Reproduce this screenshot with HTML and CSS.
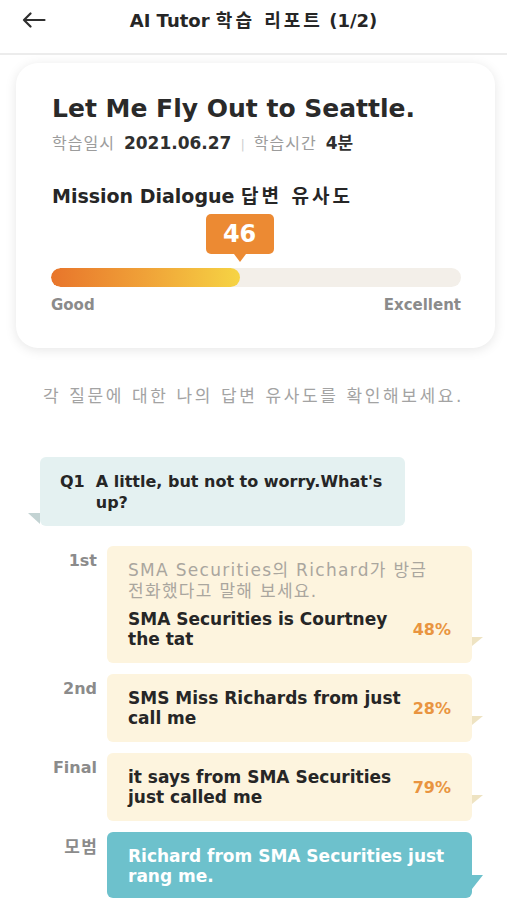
FILE: index.html
```html
<!DOCTYPE html>
<html lang="ko">
<head>
<meta charset="utf-8">
<title>AI Tutor 학습 리포트</title>
<link rel="stylesheet" href="styles.css">
</head>
<body>
<header class="topbar">
  <button class="back" aria-label="뒤로">
    <svg width="24" height="16" viewBox="0 0 24 16" fill="none" stroke="#2f2f2f" stroke-width="2.2" stroke-linecap="round" stroke-linejoin="round"><path d="M22.5 8H2M8.5 1.5L2 8l6.5 6.5"/></svg>
  </button>
  <h1 class="topbar-title">AI Tutor <span class="ko">학습 리포트</span> (1/2)</h1>
</header>

<main class="content">
  <section class="summary-card">
    <h2 class="lesson-title">Let Me Fly Out to Seattle.</h2>
    <p class="meta">
      <span class="meta-label">학습일시</span>
      <b class="meta-value">2021.06.27</b>
      <span class="sep">|</span>
      <span class="meta-label">학습시간</span>
      <b class="meta-value">4<span class="ko">분</span></b>
    </p>
    <h3 class="score-title">Mission Dialogue <span class="ko">답변 유사도</span></h3>
    <div class="score">
      <div class="badge-row" style="--v:46%">
        <span class="badge">46</span>
      </div>
      <div class="track"><div class="fill" style="width:46%"></div></div>
      <div class="scale"><span>Good</span><span>Excellent</span></div>
    </div>
  </section>

  <p class="hint">각 질문에 대한 나의 답변 유사도를 확인해보세요.</p>

  <div class="question">
    <span class="q-no">Q1</span>
    <span class="q-text">A little, but not to worry.What's up?</span>
  </div>

  <ol class="answers">
    <li class="answer">
      <span class="a-label">1st</span>
      <div class="bubble">
        <p class="prompt">SMA Securities의 Richard가 방금 전화했다고 말해 보세요.</p>
        <div class="a-row">
          <p class="a-text">SMA Securities is Courtney the tat</p>
          <span class="pct">48%</span>
        </div>
      </div>
    </li>
    <li class="answer">
      <span class="a-label">2nd</span>
      <div class="bubble">
        <div class="a-row">
          <p class="a-text">SMS Miss Richards from just call me</p>
          <span class="pct">28%</span>
        </div>
      </div>
    </li>
    <li class="answer">
      <span class="a-label">Final</span>
      <div class="bubble">
        <div class="a-row">
          <p class="a-text">it says from SMA Securities just called me</p>
          <span class="pct">79%</span>
        </div>
      </div>
    </li>
    <li class="answer">
      <span class="a-label a-label-ko">모범</span>
      <div class="bubble model">
        <p class="a-text">Richard from SMA Securities just rang me.</p>
      </div>
    </li>
  </ol>
</main>
</body>
</html>
```

FILE: styles.css
```css
* { box-sizing: border-box; }

body {
  margin: 0;
  width: 507px;
  background: #ffffff;
  font-family: "DejaVu Sans", "Noto Sans CJK KR", sans-serif;
  color: #2b2b2b;
}

p, h1, h2, h3, ol { margin: 0; padding: 0; }

/* ---------- top bar ---------- */
.topbar {
  height: 55px;
  display: grid;
  grid-template-columns: 1fr auto 1fr;
  align-items: start;
  padding-top: 10px;
  border-bottom: 2px solid #ececec;
}

.back {
  justify-self: start;
  margin-left: 22px;
  margin-top: 2px;
  padding: 0;
  border: 0;
  background: none;
  display: flex;
}

.topbar-title {
  font-size: 18px;
  line-height: 22px;
  font-weight: bold;
  color: #262626;
  white-space: nowrap;
}

.topbar-title .ko { letter-spacing: 3px; }

/* ---------- summary card ---------- */
.content { padding: 8px 0 0; }

.summary-card {
  margin: 0 12px 0 16px;
  padding: 31px 35px 34px 36px;
  border-radius: 22px;
  background: #fff;
  box-shadow: 0 2px 12px rgba(0, 0, 0, 0.1);
}

.lesson-title {
  font-size: 25px;
  line-height: 30px;
  font-weight: bold;
  color: #2a2a2a;
}

.meta {
  margin-top: 8px;
  font-size: 16px;
  line-height: 22px;
  display: flex;
  align-items: baseline;
  gap: 9px;
}

.meta-label { color: #9c9c9c; letter-spacing: 1px; }
.meta-value { color: #2f2f2f; font-size: 17px; }
.sep { color: #d0d0d0; font-size: 13px; }

.score-title {
  margin-top: 28px;
  font-size: 19px;
  line-height: 24px;
  font-weight: bold;
  color: #262626;
}
.score-title .ko { letter-spacing: 3px; }

.score { margin-top: 6px; margin-right: -1px; margin-left: -1px; }

.badge-row {
  height: 54px;
  padding-left: calc(var(--v) - 34px);
}

.badge {
  position: relative;
  display: inline-flex;
  align-items: center;
  justify-content: center;
  width: 68px;
  height: 40px;
  border-radius: 5px;
  background: #ec8a33;
  color: #fff;
  font-size: 24px;
  font-weight: bold;
}

.badge::after {
  content: "";
  position: absolute;
  left: 28px;
  bottom: -8px;
  border-left: 6px solid transparent;
  border-right: 6px solid transparent;
  border-top: 8px solid #ec8a33;
}

.track {
  height: 19px;
  border-radius: 10px;
  background: #f3efe9;
  overflow: hidden;
}

.fill {
  height: 100%;
  border-radius: 10px;
  background: linear-gradient(90deg, #e8752b 0%, #f0a238 50%, #f6d444 100%);
}

.scale {
  margin-top: 9px;
  display: flex;
  justify-content: space-between;
  font-size: 15px;
  line-height: 18px;
  font-weight: bold;
  color: #8b8b8b;
}

/* ---------- hint ---------- */
.hint {
  margin-top: 36px;
  text-align: center;
  font-size: 17px;
  line-height: 24px;
  color: #a3a3a3;
  letter-spacing: 2.6px;
}

/* ---------- question ---------- */
.question {
  position: relative;
  margin: 49px 0 0 40px;
  width: 365px;
  padding: 14px 16px 13px 20px;
  border-radius: 6px;
  background: #e4f1f1;
  display: flex;
  gap: 11px;
  font-size: 16px;
  line-height: 21px;
  font-weight: bold;
  color: #262626;
}

.question::before {
  content: "";
  position: absolute;
  left: -12px;
  bottom: 2px;
  border-top: 11px solid #c3d3d3;
  border-left: 12px solid transparent;
}

/* ---------- answers ---------- */
.answers {
  list-style: none;
  margin-top: 20px;
  padding: 0 35px 0 37px;
  display: flex;
  flex-direction: column;
  gap: 11px;
}

.answer {
  display: grid;
  grid-template-columns: 60px 1fr;
  column-gap: 10px;
  align-items: start;
}

.a-label {
  margin-top: 5px;
  text-align: right;
  font-size: 16px;
  line-height: 20px;
  font-weight: bold;
  color: #8b8b8b;
}

.a-label-ko { font-size: 17px; letter-spacing: 1.5px; margin-right: -1.5px; }

.bubble {
  position: relative;
  padding: 14px 21px 14px 21px;
  border-radius: 6px;
  background: #fdf4de;
}

.bubble::after {
  content: "";
  position: absolute;
  right: -11px;
  bottom: 17px;
  border-top: 9px solid #eee3c2;
  border-right: 11px solid transparent;
}

.prompt {
  max-width: 305px;
  margin-bottom: 7px;
  font-size: 17px;
  line-height: 21px;
  color: #aaa69e;
  letter-spacing: 1.3px;
}

.a-row {
  display: flex;
  align-items: center;
  gap: 12px;
}

.a-text {
  flex: 1;
  font-size: 17px;
  line-height: 20px;
  font-weight: bold;
  color: #262626;
}

.pct {
  font-size: 16px;
  font-weight: bold;
  color: #e99440;
}

.bubble.model {
  background: #6dc1cc;
  padding-bottom: 12px;
}
.bubble.model .a-text { color: #fff; }
.bubble.model::after {
  bottom: 9px;
  border-top: 14px solid #6dc1cc;
}
```
